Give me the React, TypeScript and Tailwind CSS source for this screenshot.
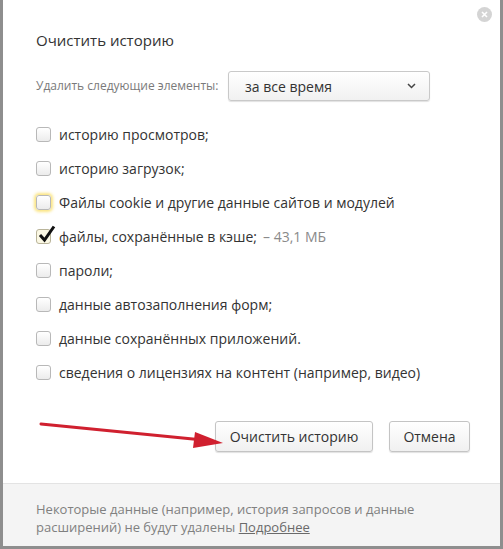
import { useState } from 'react';

const items = [
  { label: 'историю просмотров;', checked: false },
  { label: 'историю загрузок;', checked: false },
  { label: 'Файлы cookie и другие данные сайтов и модулей', checked: false, focus: true },
  { label: 'файлы, сохранённые в кэше;', checked: true, extra: '– 43,1 МБ' },
  { label: 'пароли;', checked: false },
  { label: 'данные автозаполнения форм;', checked: false },
  { label: 'данные сохранённых приложений.', checked: false },
  { label: 'сведения о лицензиях на контент (например, видео)', checked: false },
];

function Box({ checked, focus }: { checked: boolean; focus?: boolean }) {
  return (
    <span
      className={
        'relative w-[15px] h-[15px] rounded-[3px] border shrink-0 ' +
        (checked
          ? 'border-[#b9b49a] bg-[#fbf8e4]'
          : 'border-[#b8b8b8] bg-gradient-to-b from-white to-[#ececec]') +
        (focus ? ' shadow-[0_0_3px_2px_rgba(250,220,90,0.75)]' : '')
      }
    >
      {checked && (
        <svg className="absolute left-[1px] top-[-5px]" width="18" height="18" viewBox="0 0 18 18">
          <path d="M2 10 L6.5 15 L16 1.5" fill="none" stroke="#111" strokeWidth="3" strokeLinejoin="miter" />
        </svg>
      )}
    </span>
  );
}

export default function App() {
  const [list, setList] = useState(items);
  return (
    <div className="relative w-[503px] h-[549px] bg-white border-l-[3px] border-r-[3px] border-b-[3px] border-[#8e8e8e] flex flex-col font-['Open_Sans',sans-serif] text-[#333] overflow-hidden">
      <button className="absolute right-[8px] top-[7px] w-[15px] h-[15px] rounded-full bg-[#d4d4d4] flex items-center justify-center">
        <svg width="7" height="7" viewBox="0 0 7 7">
          <path d="M1 1 L6 6 M6 1 L1 6" stroke="white" strokeWidth="1.6" />
        </svg>
      </button>

      <div className="px-[33px]">
        <div className="pt-[30px] text-[15px] leading-[20px] text-[#333]">Очистить историю</div>

        <div className="mt-[21px] flex items-center">
          <span className="text-[12px] text-[#7a7a7a] w-[192px] whitespace-nowrap">Удалить следующие элементы:</span>
          <div className="w-[202px] h-[30px] rounded-[3px] border border-[#c9c9c9] bg-gradient-to-b from-white to-[#f1f1f1] shadow-[0_1px_1px_rgba(0,0,0,0.12)] flex items-center justify-between pl-[16px] pr-[13px]">
            <span className="text-[14px] text-[#333]">за все время</span>
            <svg width="9" height="6" viewBox="0 0 9 6">
              <path d="M1 1 L4.5 4.5 L8 1" fill="none" stroke="#444" strokeWidth="1.5" />
            </svg>
          </div>
        </div>

        <div className="mt-[16px] flex flex-col">
          {list.map((it, i) => (
            <label
              key={i}
              className="h-[34px] flex items-center gap-[8px] cursor-pointer"
              onClick={() => setList(list.map((x, j) => (j === i ? { ...x, checked: !x.checked } : x)))}
            >
              <Box checked={it.checked} focus={it.focus} />
              <span className="text-[14px] text-[#333] whitespace-nowrap">
                {it.label}
                {it.extra && <span className="text-[#8a8a8a] ml-[6px]">{it.extra}</span>}
              </span>
            </label>
          ))}
        </div>

        <div className="mt-[32px] flex justify-end gap-[16px] mr-[-3px]">
          <button className="h-[31px] w-[158px] rounded-[3px] border border-[#c4c4c4] bg-gradient-to-b from-white to-[#f0f0f0] shadow-[0_1px_1px_rgba(0,0,0,0.12)] text-[14px] text-[#333]">
            Очистить историю
          </button>
          <button className="h-[31px] w-[81px] rounded-[3px] border border-[#c4c4c4] bg-gradient-to-b from-white to-[#f0f0f0] shadow-[0_1px_1px_rgba(0,0,0,0.12)] text-[14px] text-[#333]">
            Отмена
          </button>
        </div>
      </div>

      <div className="mt-[31px] flex-1 bg-[#f4f4f4] border-t border-[#e3e3e3] px-[33px] pt-[16px]">
        <p className="text-[13px] leading-[18px] text-[#808080]">
          Некоторые данные (например, история запросов и данные
          <br />
          расширений) не будут удалены{' '}
          <a className="underline text-[#6a6a6a]">Подробнее</a>
        </p>
      </div>

      <svg className="absolute left-0 top-0 pointer-events-none" width="503" height="549" viewBox="0 0 503 549">
        <line x1="38" y1="424" x2="200" y2="440" stroke="#d0202f" strokeWidth="3" strokeLinecap="round" />
        <path d="M192 432 L220 443 L190 448 Z" fill="#d0202f" />
      </svg>
    </div>
  );
}
